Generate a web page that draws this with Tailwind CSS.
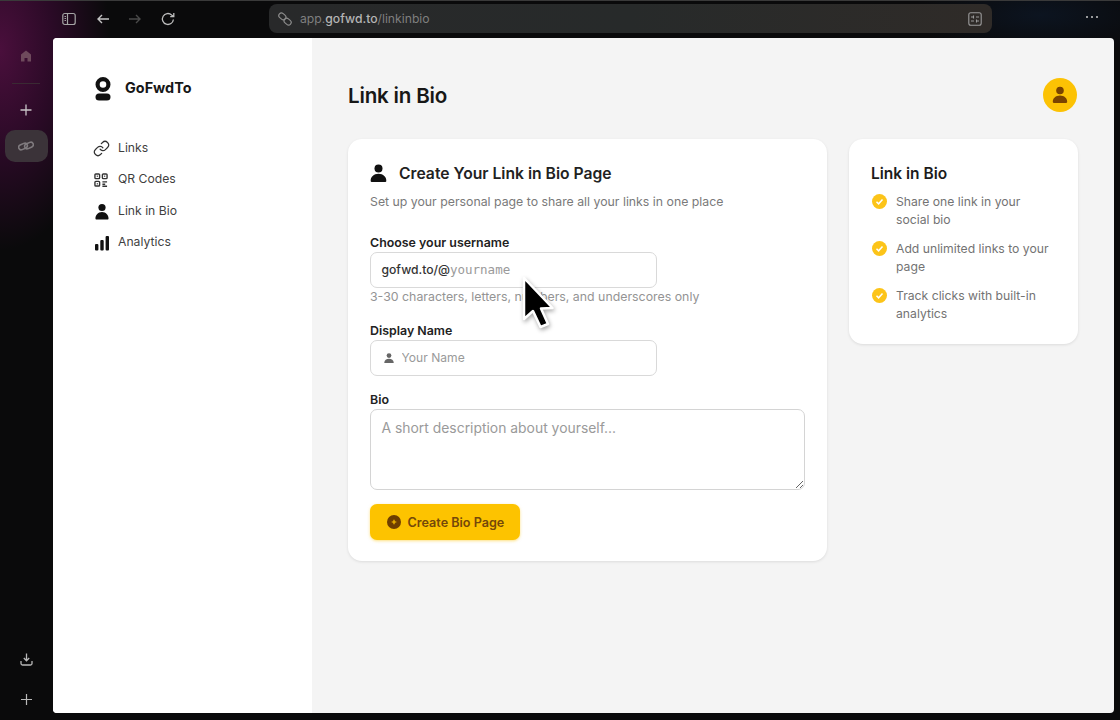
<!DOCTYPE html>
<html>
<head>
<meta charset="utf-8">
<script src="https://cdn.jsdelivr.net/npm/@tailwindcss/browser@4"></script>
</head>
<body class="m-0">
<div class="relative w-[1120px] h-[720px] overflow-hidden flex flex-col font-['Inter','Liberation_Sans',sans-serif] bg-[#0a0a0b] bg-[radial-gradient(ellipse_110px_200px_at_0px_50px,#4a0f3c_0%,#2a0a26_50%,rgba(10,10,11,0)_100%),radial-gradient(ellipse_130px_40px_at_1040px_15px,#0c1420_0%,rgba(10,10,11,0)_100%)]">
  <div class="absolute left-0 top-0 w-full h-px bg-[#3a3a3a]"></div>
  <!-- top bar -->
  <div class="h-[38px] shrink-0 flex items-center relative">
    <div class="flex items-center pl-[62px] w-[269px]">
      <svg class="w-[14px] h-[14px] text-[#a5a5a5]" viewBox="0 0 14 14" fill="none" stroke="currentColor" stroke-width="1.2"><rect x="0.8" y="1.5" width="12.4" height="11" rx="2"/><path d="M5.500 1.500v11M2.500 4.500h1.500M2.500 6.500h1.500M2.500 8.500h1.500"/></svg>
      <svg class="ml-[20px] w-[14px] h-[14px] text-[#c4c4c4]" viewBox="0 0 14 14" fill="none" stroke="currentColor" stroke-width="1.4"><path d="M13 7H2M6 3 2 7l4 4"/></svg>
      <svg class="ml-[18px] w-[14px] h-[14px] text-[#4a4a4a]" viewBox="0 0 14 14" fill="none" stroke="currentColor" stroke-width="1.4"><path d="M1 7h11M8 3l4 4-4 4"/></svg>
      <svg class="ml-[19px] w-[14px] h-[14px] text-[#bdbdbd]" viewBox="0 0 14 14" fill="none" stroke="currentColor" stroke-width="1.3"><path d="M12.400 7.500A5.500 5.500 0 1 1 10.600 2.900L12.600 4.600M12.800 1v3.700H9.200"/></svg>
    </div>
    <div class="w-[723px] h-[29px] mt-[-1px] rounded-[8px] bg-gradient-to-r from-[#28292a] via-[#272a2a] to-[#2f2b28] flex items-center pl-[9px] pr-[10px]">
      <svg class="w-[14px] h-[14px] text-[#8d8d8d] shrink-0" viewBox="0 0 24 24" fill="none" stroke="currentColor" stroke-width="2"><rect x="1" y="3" width="13" height="9" rx="4.500" transform="rotate(40 7.500 7.500)"/><rect x="10" y="12" width="13" height="9" rx="4.500" transform="rotate(40 16.500 16.500)"/></svg>
      <div class="ml-[8px] pt-[1px] text-[12.200px] text-[#7f7f7f]">app.<span class="text-[#b5b5b5] font-medium">gofwd.to</span>/linkinbio</div>
      <svg class="ml-auto w-[14px] h-[14px] text-[#9a9a9a]" viewBox="0 0 14 14" fill="none" stroke="currentColor" stroke-width="1.1"><rect x="0.800" y="0.800" width="12.400" height="12.400" rx="2"/><path d="M3 5h3M5.500 3.500v3M8 5h3M3 9h3M8 9h3M8.500 7.500v3"/></svg>
    </div>
    <div class="ml-[94px] mt-[-4px] flex gap-[3px]">
      <span class="w-[2px] h-[2px] rounded-full bg-[#c9c9c9]"></span><span class="w-[2px] h-[2px] rounded-full bg-[#c9c9c9]"></span><span class="w-[2px] h-[2px] rounded-full bg-[#c9c9c9]"></span>
    </div>
  </div>

  <div class="flex flex-1 min-h-0 pb-[7px] pr-[6px]">
    <!-- left rail -->
    <div class="w-[53px] shrink-0 flex flex-col items-center pr-[1px]">
      <svg class="mt-[12px] w-[12px] h-[12px] text-[#6e4a5c]" viewBox="0 0 12 12" fill="currentColor"><path d="M6 0.500 11 4.500V11.500H7.500V8H4.500V11.500H1V4.500Z"/></svg>
      <div class="mt-[21px] w-[28px] h-px bg-[#3a2a33]"></div>
      <svg class="mt-[20px] w-[12px] h-[12px] text-[#c9c5c8]" viewBox="0 0 12 12" fill="none" stroke="currentColor" stroke-width="1.300"><path d="M6 .5v11M.5 6h11"/></svg>
      <div class="mt-[14px] w-[43px] h-[32px] rounded-[10px] bg-[#3b3339] flex items-center justify-center">
        <svg class="w-[16px] h-[12px] text-[#7f7a7e]" viewBox="0 0 16 12" fill="none" stroke="currentColor" stroke-width="1.600"><rect x="0.500" y="4" width="9" height="5" rx="2.500" transform="rotate(-25 5 6.500)"/><rect x="6.500" y="3" width="9" height="5" rx="2.500" transform="rotate(-25 11 5.500)"/></svg>
      </div>
      <div class="mt-auto flex flex-col items-center pb-[8px]">
        <svg class="mb-[1px] w-[13px] h-[13px] text-[#b9b9b9]" viewBox="0 0 13 13" fill="none" stroke="currentColor" stroke-width="1.300"><path d="M6.500 .5v7M3.800 5l2.700 2.800L9.200 5M1 8v2.500a1.500 1.500 0 0 0 1.500 1.500h8a1.500 1.500 0 0 0 1.500-1.500V8"/></svg>
        <svg class="mt-[27px] w-[11px] h-[11px] text-[#b9b9b9]" viewBox="0 0 11 11" fill="none" stroke="currentColor" stroke-width="1.200"><path d="M5.500 0v11M0 5.500h11"/></svg>
      </div>
    </div>

    <!-- app -->
    <div class="w-[1061px] flex rounded-[4px] overflow-hidden bg-[#f4f4f4]">
      <!-- sidebar -->
      <aside class="w-[259px] shrink-0 bg-white pl-[40px] pt-[39px]">
        <div class="flex items-center h-[24px] pl-[2px]">
          <svg class="w-[16px] h-[24px] text-[#111]" viewBox="0 0 16 24" fill="currentColor"><path fill-rule="evenodd" d="M8 0a7.500 7.500 0 1 1 0 15A7.500 7.500 0 0 1 8 0Zm0 4.200a3.300 3.300 0 1 0 0 6.600 3.300 3.300 0 0 0 0-6.600Z"/><rect x="0.500" y="16.500" width="15" height="7" rx="3.500"/></svg>
          <span class="ml-[14px] mt-[-2px] text-[14.400px] font-bold text-[#171717]">GoFwdTo</span>
        </div>
        <nav class="mt-[31px] text-[12.200px] text-[#3f3f3f]">
          <div class="flex items-center h-[32px]">
            <svg class="w-[17px] h-[17px] text-[#333]" viewBox="0 0 24 24" fill="none" stroke="currentColor" stroke-width="1.700" stroke-linecap="round"><path d="M10 13a5 5 0 0 0 7.540.54l3-3a5 5 0 0 0-7.070-7.070l-1.720 1.710"/><path d="M14 11a5 5 0 0 0-7.540-.54l-3 3a5 5 0 0 0 7.070 7.070l1.710-1.710"/></svg>
            <span class="ml-[8px]">Links</span>
          </div>
          <div class="flex items-center h-[31px]">
            <svg class="ml-[1px] w-[14px] h-[14px] text-[#333]" viewBox="0 0 15 15" fill="none" stroke="currentColor" stroke-width="1.500"><rect x="1" y="1" width="5" height="5" rx="1"/><rect x="9" y="1" width="5" height="5" rx="1"/><rect x="1" y="9" width="5" height="5" rx="1"/><path d="M9 9.500h5M9 12h3M9 14.200h5M3 3.500h1M11 3.500h1M3 11.500h1"/></svg>
            <span class="ml-[10px]">QR Codes</span>
          </div>
          <div class="flex items-center h-[32px]">
            <svg class="w-[16px] h-[17px] text-[#111] ml-[1px]" viewBox="0 0 16 16" fill="currentColor"><circle cx="8" cy="4" r="3.600"/><path d="M1.500 15.500c-.5-3.600 2.500-7 6.500-7s7 3.400 6.500 7c-.1.300-.3.500-.6.500H2.100c-.3 0-.5-.2-.6-.5Z"/></svg>
            <span class="ml-[8px]">Link in Bio</span>
          </div>
          <div class="flex items-center h-[31px]">
            <svg class="w-[16px] h-[16px] text-[#111] ml-[1px]" viewBox="0 0 16 16" fill="currentColor"><rect x="1" y="9" width="3.400" height="6.500" rx="1"/><rect x="6.300" y="5" width="3.400" height="10.500" rx="1"/><rect x="11.600" y="1" width="3.400" height="14.500" rx="1"/></svg>
            <span class="ml-[8px]">Analytics</span>
          </div>
        </nav>
      </aside>

      <!-- main -->
      <main class="flex-1 pl-[36px] pr-[36px] pt-[40px]">
        <div class="flex items-start justify-between h-[36px]">
          <h1 class="text-[20.600px] leading-[36px] font-semibold text-[#171717] tracking-[-0.2px]">Link in Bio</h1>
          <div class="w-[34px] h-[34px] rounded-full bg-[#fcc204] flex items-center justify-center mr-[1px]">
            <svg class="w-[16px] h-[18px] text-[#7a4300]" viewBox="0 0 16 18" fill="currentColor"><circle cx="8" cy="4.500" r="3.800"/><path d="M.8 16c-.3-3.600 3-6.500 7.200-6.500s7.500 2.900 7.200 6.500c-.1.700-.5 1-1.200 1H2c-.7 0-1.100-.3-1.200-1Z"/></svg>
          </div>
        </div>
        <div class="mt-[25px] flex items-start gap-[22px]">
          <!-- form card -->
          <section class="w-[479px] shrink-0 bg-white rounded-[14px] shadow-[0_1px_3px_rgba(0,0,0,0.1)] px-[22px] pt-[22px] pb-[21px]">
            <div class="flex items-center h-[24px]">
              <svg class="w-[17px] h-[19px] text-[#111]" viewBox="0 0 16 18" fill="currentColor"><circle cx="8" cy="4.200" r="3.800"/><path d="M.6 16.300c-.4-3.800 3-7 7.400-7s7.800 3.200 7.400 7c-.1.500-.4.700-.9.700H1.500c-.5 0-.8-.2-.9-.7Z"/></svg>
              <h2 class="ml-[12px] pt-[1px] text-[15.700px] font-semibold text-[#222]">Create Your Link in Bio Page</h2>
            </div>
            <p class="mt-[7px] text-[12.300px] leading-[20px] text-[#7a7a7a]">Set up your personal page to share all your links in one place</p>

            <label class="mt-[22px] block text-[12.400px] leading-[18px] font-semibold text-[#222]">Choose your username</label>
            <div class="w-[287.500px] h-[36px] rounded-[7px] border border-[#d9d9d9] bg-white flex items-center pl-[11px] ml-[-0.5px]">
              <span class="text-[12.150px] font-medium text-[#333]">gofwd.to/@</span>
              <input class="min-w-0 flex-1 outline-none font-['DejaVu_Sans_Mono','Liberation_Mono',monospace] text-[12.500px] placeholder:text-[#9a9a9a]" placeholder="yourname">
            </div>
            <p class="text-[12.350px] leading-[18px] text-[#949494]">3-30 characters, letters, numbers, and underscores only</p>

            <label class="mt-[16px] block text-[12.400px] leading-[18px] font-semibold text-[#222]">Display Name</label>
            <div class="w-[287.500px] h-[36px] rounded-[7px] border border-[#d9d9d9] bg-white flex items-center pl-[13px] ml-[-0.5px]">
              <svg class="w-[10px] h-[10px] text-[#666]" viewBox="0 0 16 16" fill="currentColor"><circle cx="8" cy="4" r="3.800"/><path d="M.5 15c0-3.800 3.300-6 7.500-6s7.500 2.200 7.500 6v1H.5Z"/></svg>
              <input class="ml-[8px] min-w-0 flex-1 outline-none text-[12.100px] placeholder:text-[#9a9a9a]" placeholder="Your Name">
            </div>

            <label class="mt-[15px] block text-[12.400px] leading-[18px] font-semibold text-[#222]">Bio</label>
            <textarea class="block w-[435.500px] h-[81px] rounded-[7px] border border-[#d4d4d4] px-[11px] py-[8px] text-[13.900px] leading-[20px] outline-none placeholder:text-[#9a9a9a] ml-[-0.5px]" placeholder="A short description about yourself..."></textarea>

            <div class="mt-[14px] w-[150.500px] h-[36px] rounded-[7px] bg-[#fdc300] shadow-[0_1px_3px_rgba(253,195,0,0.5)] flex items-center pl-[17px] ml-[-0.5px]">
              <svg class="w-[14px] h-[14px]" viewBox="0 0 14 14"><circle cx="7" cy="7" r="7" fill="#6e3e00"/><path d="M7 4.700v4.600M4.700 7h4.600" stroke="#fdc300" stroke-width="1.200"/></svg>
              <span class="ml-[7px] pt-[2px] text-[12.600px] font-semibold text-[#74480a]">Create Bio Page</span>
            </div>
          </section>

          <!-- info card -->
          <section class="w-[229px] shrink-0 bg-white rounded-[14px] shadow-[0_1px_3px_rgba(0,0,0,0.1)] px-[22px] pt-[23px] pb-[21px]">
            <h3 class="text-[15.500px] leading-[24px] font-semibold text-[#1c1c1c]">Link in Bio</h3>
            <ul class="text-[12.200px] leading-[18px] text-[#737373]">
              <li class="mt-[7px] flex items-start">
                <svg class="mt-[1px] ml-[1px] w-[15px] h-[15px] shrink-0" viewBox="0 0 15 15"><circle cx="7.500" cy="7.500" r="7.500" fill="#fcc419"/><path d="M4.500 7.700 6.600 9.800 10.500 5.500" fill="none" stroke="#fff" stroke-width="1.500"/></svg>
                <span class="ml-[9px]">Share one link in your social bio</span>
              </li>
              <li class="mt-[11px] flex items-start">
                <svg class="mt-[1px] ml-[1px] w-[15px] h-[15px] shrink-0" viewBox="0 0 15 15"><circle cx="7.500" cy="7.500" r="7.500" fill="#fcc419"/><path d="M4.500 7.700 6.600 9.800 10.500 5.500" fill="none" stroke="#fff" stroke-width="1.500"/></svg>
                <span class="ml-[9px]">Add unlimited links to your page</span>
              </li>
              <li class="mt-[11px] flex items-start">
                <svg class="mt-[1px] ml-[1px] w-[15px] h-[15px] shrink-0" viewBox="0 0 15 15"><circle cx="7.500" cy="7.500" r="7.500" fill="#fcc419"/><path d="M4.500 7.700 6.600 9.800 10.500 5.500" fill="none" stroke="#fff" stroke-width="1.500"/></svg>
                <span class="ml-[9px]">Track clicks with built-in analytics</span>
              </li>
            </ul>
          </section>
        </div>
      </main>
    </div>
  </div>

  <!-- mouse cursor -->
  <svg class="absolute left-[515px] top-[270px] w-[50px] h-[66px] drop-shadow-[1px_2px_2px_rgba(0,0,0,0.35)]" viewBox="515 270 50 66">
    <path d="M524 278V319L533 311L540.500 327L548 324L541 308.500L552.500 308Z" fill="#000" stroke="#fff" stroke-width="2.500" stroke-linejoin="round"/>
  </svg>
</div>
</body>
</html>
